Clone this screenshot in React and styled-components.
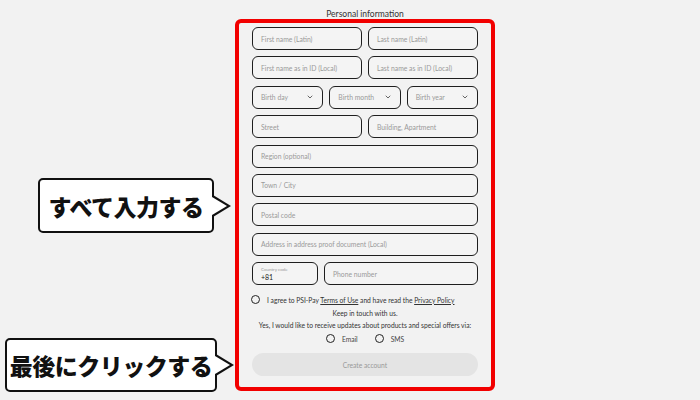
import React from 'react';
import styled, { createGlobalStyle } from 'styled-components';

const GlobalStyle = createGlobalStyle`
  html, body {
    margin: 0;
    padding: 0;
    background: #f2f2f2;
  }
  * { box-sizing: border-box; }
`;

const fields = [
  [{ label: 'First name (Latin)' }, { label: 'Last name (Latin)' }],
  [{ label: 'First name as in ID (Local)' }, { label: 'Last name as in ID (Local)' }],
  [
    { label: 'Birth day', select: true },
    { label: 'Birth month', select: true },
    { label: 'Birth year', select: true },
  ],
  [{ label: 'Street' }, { label: 'Building, Apartment' }],
  [{ label: 'Region (optional)' }],
  [{ label: 'Town / City' }],
  [{ label: 'Postal code' }],
  [{ label: 'Address in address proof document (Local)' }],
];

const Chevron = () => (
  <svg width="6" height="4" viewBox="0 0 6 4">
    <path d="M1 1 L3 3 L5 1" fill="none" stroke="#555" strokeWidth="0.9" strokeLinecap="round" />
  </svg>
);

const App = () => {
  return (
    <Page>
      <GlobalStyle />
      <Column>
        <Title>Personal information</Title>
        <Frame>
          <Fields>
            {fields.map((row, i) => (
              <Row key={i} $cols={row.length}>
                {row.map((f) => (
                  <Field key={f.label}>
                    <Placeholder>{f.label}</Placeholder>
                    {f.select && <Chevron />}
                  </Field>
                ))}
              </Row>
            ))}
            <PhoneRow>
              <CodeField>
                <SmallLabel>Country code</SmallLabel>
                <CodeValue>+81</CodeValue>
              </CodeField>
              <Field>
                <Placeholder>Phone number</Placeholder>
              </Field>
            </PhoneRow>
          </Fields>

          <Agree>
            <Radio />
            <span>
              I agree to PSI-Pay <u>Terms of Use</u> and have read the <u>Privacy Policy</u>
            </span>
          </Agree>
          <Note>Keep in touch with us.</Note>
          <Note $tight>Yes, I would like to receive updates about products and special offers via:</Note>
          <Options>
            <Option><Radio />Email</Option>
            <Option><Radio />SMS</Option>
          </Options>
          <CreateButton>Create account</CreateButton>
        </Frame>
      </Column>

      <Callout $left={38} $top={178} $width={176} $height={55}>
        すべて入力する
      </Callout>
      <Callout $left={5} $top={338} $width={212} $height={54}>
        最後にクリックする
      </Callout>
    </Page>
  );
};

const Page = styled.div`
  position: relative;
  width: 700px;
  height: 400px;
  overflow: hidden;
  padding: 9px 0 0 235px;
  font-family: 'Lato', 'Noto Sans', sans-serif;
`;

const Column = styled.div`
  width: 260px;
  display: flex;
  flex-direction: column;
  align-items: center;
`;

const Title = styled.div`
  font-size: 8.5px;
  line-height: 10px;
  color: #333;
`;

const Frame = styled.div`
  width: 260px;
  border: 4px solid #f20000;
  border-radius: 6px;
  padding: 4px 13px 11px;
`;

const Fields = styled.div`
  display: flex;
  flex-direction: column;
  gap: 6.4px;
`;

const Row = styled.div`
  display: grid;
  grid-template-columns: repeat(${({ $cols }) => $cols}, 1fr);
  gap: 6px;
`;

const Field = styled.div`
  height: 23px;
  border: 1.5px solid #1e1e1e;
  border-radius: 6px;
  display: flex;
  align-items: center;
  justify-content: space-between;
  padding: 0 9px 0 8px;
  background: #f4f4f4;
`;

const Placeholder = styled.span`
  font-size: 6.8px;
  color: #9a9a9a;
  white-space: nowrap;
`;

const PhoneRow = styled.div`
  display: grid;
  grid-template-columns: 66px 1fr;
  gap: 6px;
`;

const CodeField = styled(Field)`
  flex-direction: column;
  align-items: flex-start;
  justify-content: center;
  gap: 1px;
`;

const SmallLabel = styled.span`
  font-size: 4.5px;
  color: #999;
  line-height: 5px;
`;

const CodeValue = styled.span`
  font-size: 7px;
  color: #222;
  line-height: 8px;
`;

const Radio = styled.span`
  display: inline-block;
  width: 9px;
  height: 9px;
  border: 1.5px solid #222;
  border-radius: 50%;
  flex: none;
`;

const Agree = styled.div`
  display: flex;
  align-items: center;
  gap: 7px;
  margin: 10px 0 0 -1px;
  font-size: 6.7px;
  color: #333;
  u { text-underline-offset: 1px; }
`;

const Note = styled.div`
  text-align: center;
  font-size: 6.7px;
  color: #333;
  margin-top: ${({ $tight }) => ($tight ? '4px' : '5px')};
  white-space: nowrap;
`;

const Options = styled.div`
  display: flex;
  justify-content: center;
  gap: 17px;
  margin-top: 5px;
`;

const Option = styled.label`
  display: flex;
  align-items: center;
  gap: 7px;
  font-size: 6.7px;
  color: #444;
`;

const CreateButton = styled.div`
  margin-top: 10px;
  height: 23px;
  border-radius: 12px;
  background: #e4e4e4;
  color: #999;
  font-size: 6.7px;
  display: flex;
  align-items: center;
  justify-content: center;
`;

const Callout = styled.div`
  position: absolute;
  left: ${({ $left }) => $left}px;
  top: ${({ $top }) => $top}px;
  width: ${({ $width }) => $width}px;
  height: ${({ $height }) => $height}px;
  background: #fff;
  border: 2px solid #111;
  border-radius: 5px;
  display: flex;
  align-items: center;
  justify-content: center;
  font-family: 'Noto Sans CJK JP', sans-serif;
  font-weight: 900;
  font-size: 23px;
  color: #111;
  letter-spacing: -0.5px;

  &::before,
  &::after {
    content: '';
    position: absolute;
    top: 50%;
    width: 0;
    height: 0;
    border-style: solid;
  }
  &::before {
    right: -19px;
    margin-top: -11px;
    border-width: 11px 0 11px 18px;
    border-color: transparent transparent transparent #111;
  }
  &::after {
    right: -15px;
    margin-top: -9px;
    border-width: 9px 0 9px 15px;
    border-color: transparent transparent transparent #fff;
  }
`;

export default App;
